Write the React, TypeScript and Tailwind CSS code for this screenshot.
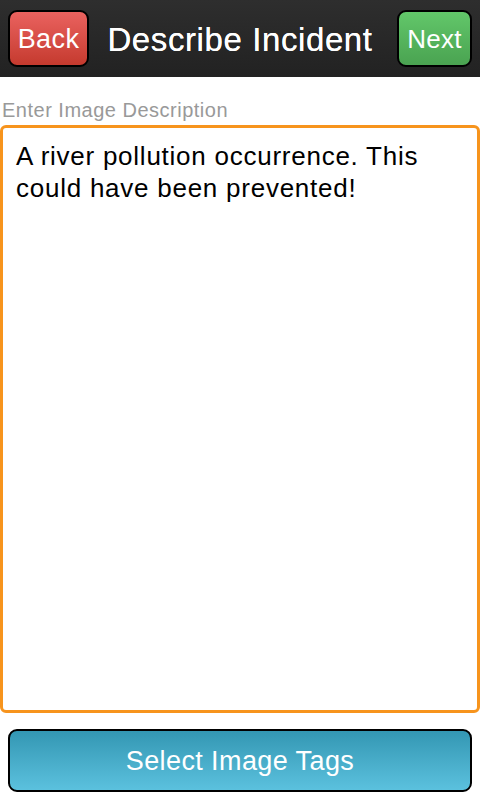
export default function App() {
  return (
    <div className="flex h-[800px] w-[480px] flex-col bg-white font-['Liberation_Sans',Arial,sans-serif]">
      <header className="flex h-[77px] shrink-0 items-center justify-between bg-gradient-to-b from-[#2e2e2e] to-[#222] px-2 pb-[1px]">
        <button className="flex h-[57px] w-[81px] items-center justify-center rounded-[9px] border-2 border-black bg-gradient-to-b from-[#ea625f] to-[#c53a2e] pt-[2px] text-[27px] tracking-[0.4px] text-white">
          Back
        </button>
        <h1 className="mr-[6px] pt-[4px] text-[33px] tracking-[0.6px] text-white [text-shadow:0_0_0.6px_#fff]">
          Describe Incident
        </h1>
        <button className="flex h-[57px] w-[75px] items-center justify-center rounded-[9px] border-2 border-black bg-gradient-to-b from-[#62c76a] to-[#4aa351] pt-[2px] text-[26px] tracking-[0.2px] text-white">
          Next
        </button>
      </header>
      <label htmlFor="desc" className="mt-[21px] px-[2px] text-[20px] leading-[24px] tracking-[0.5px] text-[#999]">
        Enter Image Description
      </label>
      <textarea
        id="desc"
        className="mt-[3px] h-[588px] w-full resize-none rounded-[6px] border-[3px] border-[#f7941d] px-[13px] py-[12px] text-[26px] leading-[32px] tracking-[0.75px] text-black outline-none"
        defaultValue="A river pollution occurrence. This could have been prevented!"
      />
      <div className="px-2 pt-[16px]">
        <button className="flex h-[63px] w-full items-center justify-center rounded-[9px] border-2 border-black bg-gradient-to-b from-[#3397b3] to-[#5bc1de] pt-[2px] text-[27px] tracking-[0.4px] text-white">
          Select Image Tags
        </button>
      </div>
    </div>
  );
}
